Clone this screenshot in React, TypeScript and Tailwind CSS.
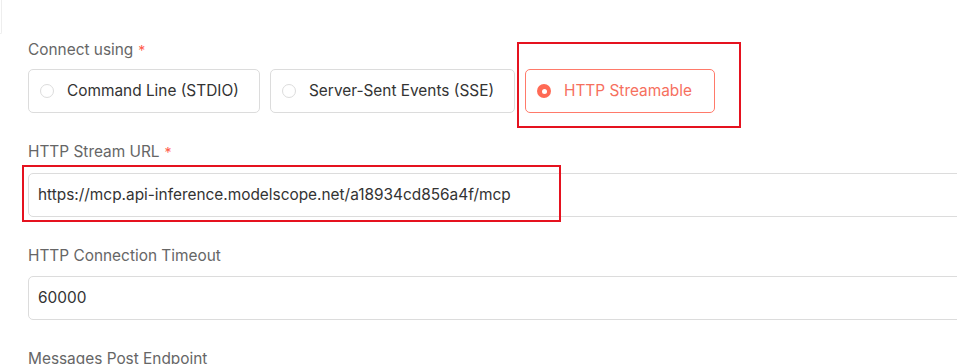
import React from 'react';

const font = { fontFamily: 'Inter, "Noto Sans", sans-serif' };

const Label: React.FC<{ text: string; required?: boolean }> = ({ text, required }) => (
  <div className="h-[22px] flex items-center text-[15.4px] text-[#666666] pt-[2px]">
    {text}
    {required && <span className="ml-[5px] text-[#ff5a4a] text-[14px]">*</span>}
  </div>
);

const RadioCard: React.FC<{ label: string; active?: boolean; width: string }> = ({ label, active, width }) => (
  <div
    className={`h-[44px] ${width} flex items-center gap-[13px] px-[11px] rounded-[5px] border ${
      active ? 'border-[#ff7a6a] text-[#f6705e]' : 'border-[#dcdcdc] text-[#333333]'
    }`}
  >
    {active ? (
      <span className="w-[14px] h-[14px] rounded-full bg-[#ff6a55] flex items-center justify-center">
        <span className="w-[5px] h-[5px] rounded-full bg-white" />
      </span>
    ) : (
      <span className="w-[14px] h-[14px] rounded-full border border-[#dcdcdc] bg-white" />
    )}
    <span className="text-[15.4px]">{label}</span>
  </div>
);

const TextField: React.FC<{ value: string }> = ({ value }) => (
  <div className="h-[44px] w-[960px] flex items-center px-[9px] rounded-l-[5px] border border-[#dcdcdc] text-[15.4px] text-[#333333]">
    {value}
  </div>
);

export default function App() {
  return (
    <div className="relative w-[957px] h-[364px] bg-white overflow-hidden" style={font}>
      <div className="absolute left-0 top-0 w-[2px] h-[34px] border-r border-b border-[#eeeeee] rounded-br-[4px]" />

      <div className="pl-[28px] pt-[38px] flex flex-col">
        <Label text="Connect using" required />
        <div className="mt-[9px] flex gap-[10px]">
          <RadioCard label="Command Line (STDIO)" width="w-[232px]" />
          <RadioCard label="Server-Sent Events (SSE)" width="w-[245px]" />
          <RadioCard label="HTTP Streamable" width="w-[190px]" active />
        </div>

        <div className="mt-[27px]">
          <Label text="HTTP Stream URL" required />
        </div>
        <div className="mt-[11px]">
          <TextField value="https://mcp.api-inference.modelscope.net/a18934cd856a4f/mcp" />
        </div>

        <div className="mt-[27px]">
          <Label text="HTTP Connection Timeout" />
        </div>
        <div className="mt-[10px]">
          <TextField value="60000" />
        </div>

        <div className="mt-[27px]">
          <Label text="Messages Post Endpoint" />
        </div>
      </div>

      {/* annotation boxes */}
      <div className="absolute left-[517px] top-[42px] w-[224px] h-[86px] border-2 border-[#e5121f]" />
      <div className="absolute left-[22px] top-[165px] w-[539px] h-[57px] border-2 border-[#e5121f]" />
    </div>
  );
}
